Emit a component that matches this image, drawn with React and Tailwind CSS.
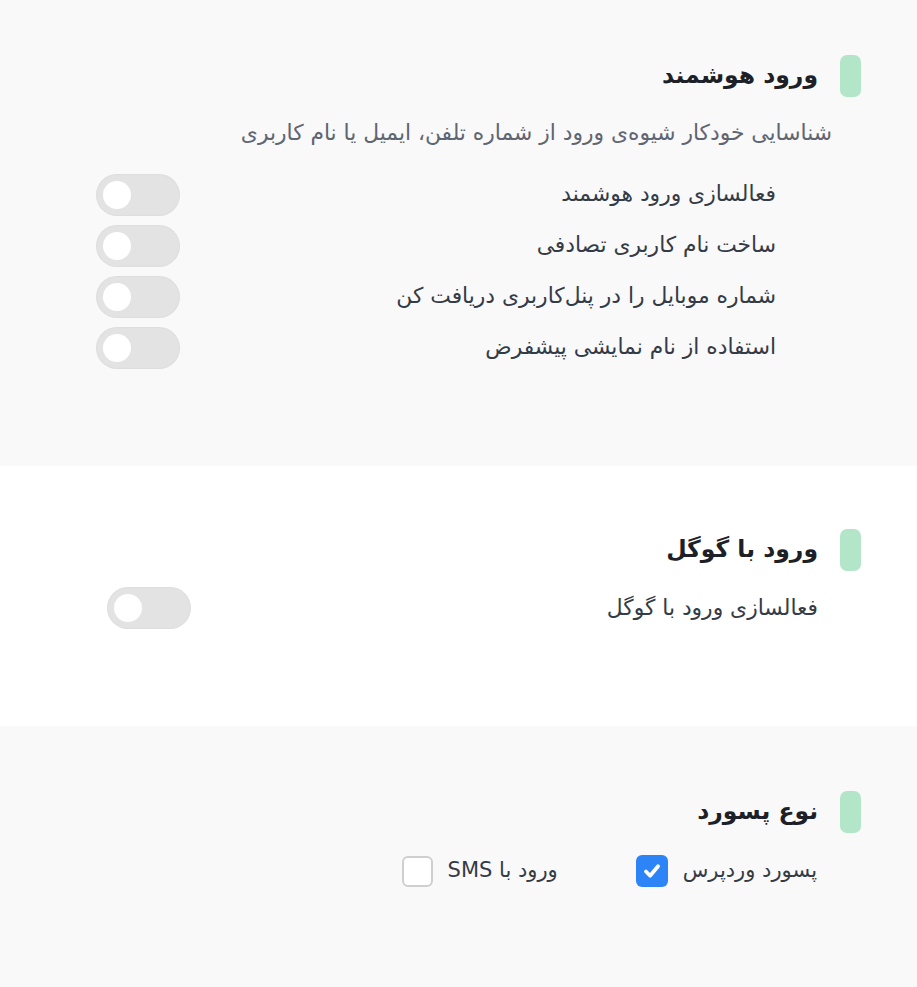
const font = { fontFamily: '"DejaVu Sans", "Noto Sans", sans-serif' };

function SectionTitle({ children }) {
  return (
    <div className="flex items-center gap-[22px]">
      <span className="block w-[21px] h-[42px] rounded-[7px] bg-[#b3e5c9]" />
      <h2 className="text-[23.5px] font-bold text-[#1d2127] leading-none">{children}</h2>
    </div>
  );
}

function Toggle() {
  return (
    <div dir="ltr" className="flex items-center w-[84px] h-[42px] rounded-full bg-[#e3e3e3] px-[7px] shadow-[inset_0_0_2px_rgba(0,0,0,0.08)]">
      <span className="block w-[28px] h-[28px] rounded-full bg-white" />
    </div>
  );
}

function ToggleRow({ label }) {
  return (
    <div className="flex items-center justify-between h-[51px]">
      <span className="text-[21.8px] text-[#333b47]">{label}</span>
      <Toggle />
    </div>
  );
}

function Checkbox({ checked }) {
  if (checked) {
    return (
      <span className="flex items-center justify-center w-[32px] h-[32px] rounded-[6px] bg-[#2d84f7]">
        <svg width="22" height="22" viewBox="0 0 20 20" fill="none">
          <path d="M4.5 10.5l3.8 3.8 7.2-8.6" stroke="white" strokeWidth="3.4" strokeLinecap="round" strokeLinejoin="round" />
        </svg>
      </span>
    );
  }
  return <span className="block w-[31px] h-[31px] rounded-[6px] border-2 border-[#cfcfcf] bg-white" />;
}

export default function App() {
  const rows = [
    'فعالسازی ورود هوشمند',
    'ساخت نام کاربری تصادفی',
    'شماره موبایل را در پنل‌کاربری دریافت کن',
    'استفاده از نام نمایشی پیشفرض',
  ];

  return (
    <div dir="rtl" style={font} className="w-[917px] min-h-[987px] bg-[#f9f9f9]">
      {/* ورود هوشمند */}
      <section className="h-[466px] bg-[#f9f9f9] pt-[55px] pr-[56px]">
        <SectionTitle>ورود هوشمند</SectionTitle>
        <p className="mt-[21px] mr-[29px] text-[21.8px] leading-[30px] text-[#5f6672]">
          شناسایی خودکار شیوه‌ی ورود از شماره تلفن، ایمیل یا نام کاربری
        </p>
        <div className="mt-[21px] mr-[85px] ml-[96px]">
          {rows.map((r) => (
            <ToggleRow key={r} label={r} />
          ))}
        </div>
      </section>

      {/* ورود با گوگل */}
      <section className="h-[260px] bg-white pt-[63px] pr-[56px]">
        <SectionTitle>ورود با گوگل</SectionTitle>
        <div className="mt-[16px] mr-[43px] ml-[107px] flex items-center justify-between">
          <span className="text-[21.8px] text-[#333b47]">فعالسازی ورود با گوگل</span>
          <Toggle />
        </div>
      </section>

      {/* نوع پسورد */}
      <section className="h-[261px] bg-[#f9f9f9] pt-[65px] pr-[56px]">
        <SectionTitle>نوع پسورد</SectionTitle>
        <div className="mt-[22px] mr-[44px] flex items-center gap-[78px]">
          <label className="flex items-center gap-[15px]">
            <span className="text-[21px] text-[#333b47]">پسورد وردپرس</span>
            <Checkbox checked />
          </label>
          <label className="flex items-center gap-[15px]">
            <span className="text-[21px] text-[#333b47]">ورود با SMS</span>
            <Checkbox />
          </label>
        </div>
      </section>
    </div>
  );
}
